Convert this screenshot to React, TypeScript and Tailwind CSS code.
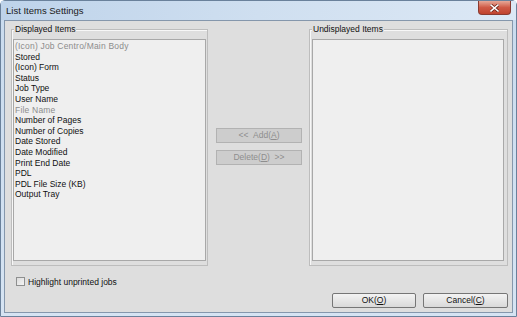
import React from 'react';

const displayed = [
  { label: '(Icon) Job Centro/Main Body', muted: true },
  { label: 'Stored' },
  { label: '(Icon) Form' },
  { label: 'Status' },
  { label: 'Job Type' },
  { label: 'User Name' },
  { label: 'File Name', muted: true },
  { label: 'Number of Pages' },
  { label: 'Number of Copies' },
  { label: 'Date Stored' },
  { label: 'Date Modified' },
  { label: 'Print End Date' },
  { label: 'PDL' },
  { label: 'PDL File Size (KB)' },
  { label: 'Output Tray' },
];

const font = "font-['Liberation_Sans',Arial,sans-serif]";

const GroupBox = ({ title, className, children }: { title: string; className: string; children?: React.ReactNode }) => (
  <div className={`relative flex flex-col border border-[#bdbdbd] shadow-[inset_1px_1px_0_#f7f7f7] ${className}`}>
    <span className="absolute left-[2px] top-[-6px] bg-[#dedede] px-[1px] text-[8.5px] leading-[10px] text-[#111]">
      {title}
    </span>
    {children}
  </div>
);

export default function App() {
  return (
    <div className={`${font} flex h-[317px] w-[517px] flex-col rounded-t-[5px] border border-[#6a819b] bg-gradient-to-b from-[#c9dbee] to-[#d6e4f3]`}>
      {/* title bar */}
      <div className="flex h-[19px] items-start bg-gradient-to-r from-[#bed3ea] via-[#cfdff0] to-[#dce8f5]">
        <span className="pl-[5px] pt-[4px] text-[9.5px] leading-[12px] text-[#1a1a1a]">List Items Settings</span>
        <button className="ml-auto mr-[5px] flex h-[14px] w-[33px] items-center justify-center rounded-b-[4px] border border-t-0 border-[#8a3a30] bg-gradient-to-b from-[#e6a898] via-[#cf5a46] to-[#c0432e] text-white">
          <svg width="9" height="8" viewBox="0 0 9 8">
            <path d="M1 1 L8 7 M8 1 L1 7" stroke="#6a1f14" strokeWidth="3" strokeLinecap="square" />
            <path d="M1 1 L8 7 M8 1 L1 7" stroke="#ffffff" strokeWidth="1.6" strokeLinecap="square" />
          </svg>
        </button>
      </div>

      {/* client area */}
      <div className="ml-[3px] flex h-[293px] w-[509px] flex-col border border-[#8597ac] bg-[#dedede] pl-[6px] pr-[4px] pt-[8px]">
        <div className="flex h-[237px]">
          <GroupBox title="Displayed Items" className="w-[197px] pb-[4px] pl-[1px] pr-[1px] pt-[9px]">
            <div className="flex-1 border border-[#a8a8a8] bg-[#efefef] pl-[1px] pt-[1px]">
              {displayed.map((item) => (
                <div
                  key={item.label}
                  className={`text-[8.5px] leading-[10.6px] ${item.muted ? 'tracking-[0.2px] text-[#8c8c8c]' : 'text-[#101010]'}`}
                >
                  {item.label}
                </div>
              ))}
            </div>
          </GroupBox>

          <div className="flex w-[101px] flex-col gap-[7px] pl-[8px] pt-[99px]">
            <button className="h-[15px] w-[86px] border border-[#b2b2b2] bg-[#cdcdcd] text-[8.5px] text-[#8e8e8e]">
              &lt;&lt;&nbsp;&nbsp;Add(<span className="underline">A</span>)
            </button>
            <button className="h-[15px] w-[86px] border border-[#b2b2b2] bg-[#cdcdcd] text-[8.5px] text-[#8e8e8e]">
              Delete(<span className="underline">D</span>)&nbsp;&nbsp;&gt;&gt;
            </button>
          </div>

          <GroupBox title="Undisplayed Items" className="w-[199px] pb-[4px] pl-[2px] pr-[3px] pt-[9px]">
            <div className="flex-1 border border-[#a8a8a8] bg-[#efefef]" />
          </GroupBox>
        </div>

        <label className="mt-[11px] flex h-[9px] items-center gap-[3px] pl-[5px]">
          <span className="h-[9px] w-[9px] border border-[#8e8f8f] bg-gradient-to-br from-[#dcdcdc] to-[#f4f4f4]" />
          <span className="text-[8.5px] leading-[10px] text-[#111]">Highlight unprinted jobs</span>
        </label>

        <div className="mt-[7px] flex justify-end gap-[7px]">
          <button className="h-[15px] w-[84px] rounded-[2px] border border-[#767676] bg-gradient-to-b from-[#f3f3f3] to-[#d9d9d9] text-[8.5px] text-[#111]">
            OK(<span className="underline">O</span>)
          </button>
          <button className="h-[15px] w-[85px] rounded-[2px] border border-[#767676] bg-gradient-to-b from-[#f3f3f3] to-[#d9d9d9] text-[8.5px] text-[#111]">
            Cancel(<span className="underline">C</span>)
          </button>
        </div>
      </div>
    </div>
  );
}
